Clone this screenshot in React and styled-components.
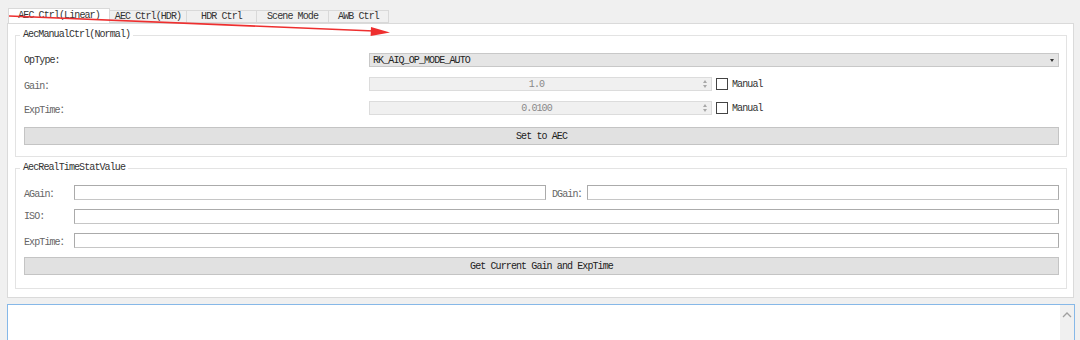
import React from "react";
import styled, { createGlobalStyle } from "styled-components";

const GlobalStyle = createGlobalStyle`
  html, body {
    margin: 0;
    padding: 0;
    background: #f0f0f0;
    height: 100%;
    overflow: hidden;
  }
  body {
    font-family: "Liberation Mono", "Noto Sans CJK SC", monospace;
    font-size: 10px;
    letter-spacing: -0.9px;
    color: #333;
  }
`;

const tabs = [
  { name: "AEC Ctrl(Linear)", width: 102 },
  { name: "AEC Ctrl(HDR)", width: 78 },
  { name: "HDR Ctrl", width: 71 },
  { name: "Scene Mode", width: 73 },
  { name: "AWB Ctrl", width: 61 },
];

const App = () => {
  return (
    <Page>
      <GlobalStyle />
      <TabBar>
        {tabs.map((t, i) => (
          <Tab key={t.name} $active={i === 0} $width={t.width}>
            {t.name}
          </Tab>
        ))}
      </TabBar>
      <Pane>
        <Group>
          <Legend>AecManualCtrl(Normal)</Legend>
          <Rows>
            <Row>
              <Label $wide $dark>
                OpType:
              </Label>
              <Combo>
                <span>RK_AIQ_OP_MODE_AUTO</span>
                <ComboArrow />
              </Combo>
            </Row>
            <Row>
              <Label $wide>Gain：</Label>
              <SpinBox>
                <SpinValue>1.0</SpinValue>
                <SpinArrows>
                  <Tri $up />
                  <Tri />
                </SpinArrows>
              </SpinBox>
              <Check />
              <CheckText>Manual</CheckText>
            </Row>
            <Row>
              <Label $wide>ExpTime：</Label>
              <SpinBox>
                <SpinValue>0.0100</SpinValue>
                <SpinArrows>
                  <Tri $up />
                  <Tri />
                </SpinArrows>
              </SpinBox>
              <Check />
              <CheckText>Manual</CheckText>
            </Row>
          </Rows>
          <Button>Set to AEC</Button>
        </Group>

        <Group $second>
          <Legend>AecRealTimeStatValue</Legend>
          <Rows>
            <Row>
              <Label>AGain：</Label>
              <Input />
              <Label $small>DGain：</Label>
              <Input />
            </Row>
            <Row>
              <Label>ISO:</Label>
              <Input />
            </Row>
            <Row>
              <Label>ExpTime：</Label>
              <Input />
            </Row>
          </Rows>
          <Button $gap={10}>Get Current Gain and ExpTime</Button>
        </Group>
      </Pane>

      <LogArea>
        <ScrollBar>
          <svg width="10" height="6" viewBox="0 0 10 6">
            <path d="M1 5 L5 1 L9 5" fill="none" stroke="#a0a0a0" strokeWidth="1.3" />
          </svg>
        </ScrollBar>
      </LogArea>

      <Arrow width="420" height="45" viewBox="0 0 420 45">
        <path d="M9 16 L374 31" stroke="#ee2f2f" strokeWidth="1.6" fill="none" />
        <path d="M371 27 L390 32.5 L370.6 36 Z" fill="#ee2f2f" />
      </Arrow>
    </Page>
  );
};

export default App;

const Page = styled.div`
  position: relative;
  width: 1080px;
  height: 340px;
  padding: 8px 5px 0 7px;
  box-sizing: border-box;
  display: flex;
  flex-direction: column;
`;

const TabBar = styled.div`
  display: flex;
  align-items: flex-end;
  height: 15px;
  padding-left: 2px;
`;

const Tab = styled.div`
  width: ${(p) => p.$width}px;
  height: ${(p) => (p.$active ? 15 : 13)}px;
  box-sizing: border-box;
  display: flex;
  align-items: center;
  justify-content: center;
  background: ${(p) => (p.$active ? "#ffffff" : "#f0f0f0")};
  border: 1px solid #d9d9d9;
  border-bottom: ${(p) => (p.$active ? "none" : "1px solid #d9d9d9")};
  margin-left: -1px;
  color: #333;
  line-height: 12px;
  white-space: nowrap;
`;

const Pane = styled.div`
  background: #ffffff;
  border: 1px solid #dadada;
  width: 1067px;
  box-sizing: border-box;
  padding: 5px 6px 8px 7px;
`;

const Group = styled.fieldset`
  margin: ${(p) => (p.$second ? "5px 0 0" : "0")};
  padding: ${(p) => (p.$second ? "11px 7px 13px 8px" : "12px 7px 11px 8px")};
  border: 1px solid #e3e3e3;
  min-width: 0;
`;

const Legend = styled.legend`
  padding: 0 3px;
  margin-left: -4px;
  line-height: 12px;
  color: #333;
`;

const Rows = styled.div`
  display: flex;
  flex-direction: column;
  gap: 10px;
`;

const Row = styled.div`
  display: flex;
  align-items: center;
  height: 14px;
`;

const Label = styled.div`
  flex: none;
  width: ${(p) => (p.$wide ? 345 : p.$small ? 35 : 50)}px;
  margin-left: ${(p) => (p.$small ? 6 : 0)}px;
  color: ${(p) => (p.$dark ? "#333" : "#666")};
  white-space: nowrap;
`;

const Combo = styled.div`
  flex: 1;
  height: 14px;
  box-sizing: border-box;
  background: #e5e5e5;
  border: 1px solid #c8c8c8;
  display: flex;
  align-items: center;
  justify-content: space-between;
  padding: 0 4px 0 3px;
  color: #222;
`;

const ComboArrow = styled.span`
  width: 0;
  height: 0;
  border-left: 2.5px solid transparent;
  border-right: 2.5px solid transparent;
  border-top: 3px solid #333;
`;

const SpinBox = styled.div`
  flex: none;
  width: 343px;
  height: 14px;
  box-sizing: border-box;
  background: #f0f0f0;
  border: 1px solid #dcdcdc;
  display: flex;
  align-items: center;
`;

const SpinValue = styled.div`
  flex: 1;
  text-align: center;
  color: #888;
  padding-left: 4px;
`;

const SpinArrows = styled.div`
  width: 12px;
  display: flex;
  flex-direction: column;
  align-items: center;
  gap: 2px;
`;

const Tri = styled.span`
  width: 0;
  height: 0;
  border-left: 2.5px solid transparent;
  border-right: 2.5px solid transparent;
  ${(p) =>
    p.$up
      ? "border-bottom: 3px solid #a8a8a8;"
      : "border-top: 3px solid #a8a8a8;"}
`;

const Check = styled.span`
  flex: none;
  width: 12px;
  height: 12px;
  box-sizing: border-box;
  border: 1px solid #444;
  background: #fff;
  margin-left: 4px;
`;

const CheckText = styled.span`
  margin-left: 4px;
  color: #333;
`;

const Input = styled.div`
  flex: 1;
  height: 15px;
  box-sizing: border-box;
  background: #fff;
  border: 1px solid #ababab;
  border-bottom-color: #c6c6c6;
`;

const Button = styled.div`
  margin-top: ${(p) => p.$gap || 12}px;
  height: 18px;
  box-sizing: border-box;
  background: #e1e1e1;
  border: 1px solid #c4c4c4;
  display: flex;
  align-items: center;
  justify-content: center;
  color: #222;
`;

const LogArea = styled.div`
  margin-top: 6px;
  width: 1068px;
  flex: 1;
  box-sizing: border-box;
  background: #fff;
  border: 1px solid #86b8e8;
  border-bottom: none;
  display: flex;
  justify-content: flex-end;
`;

const ScrollBar = styled.div`
  width: 14px;
  background: #f0f0f0;
  display: flex;
  justify-content: center;
  padding-top: 7px;
  box-sizing: border-box;
`;

const Arrow = styled.svg`
  position: absolute;
  left: 0;
  top: 0;
  pointer-events: none;
`;
